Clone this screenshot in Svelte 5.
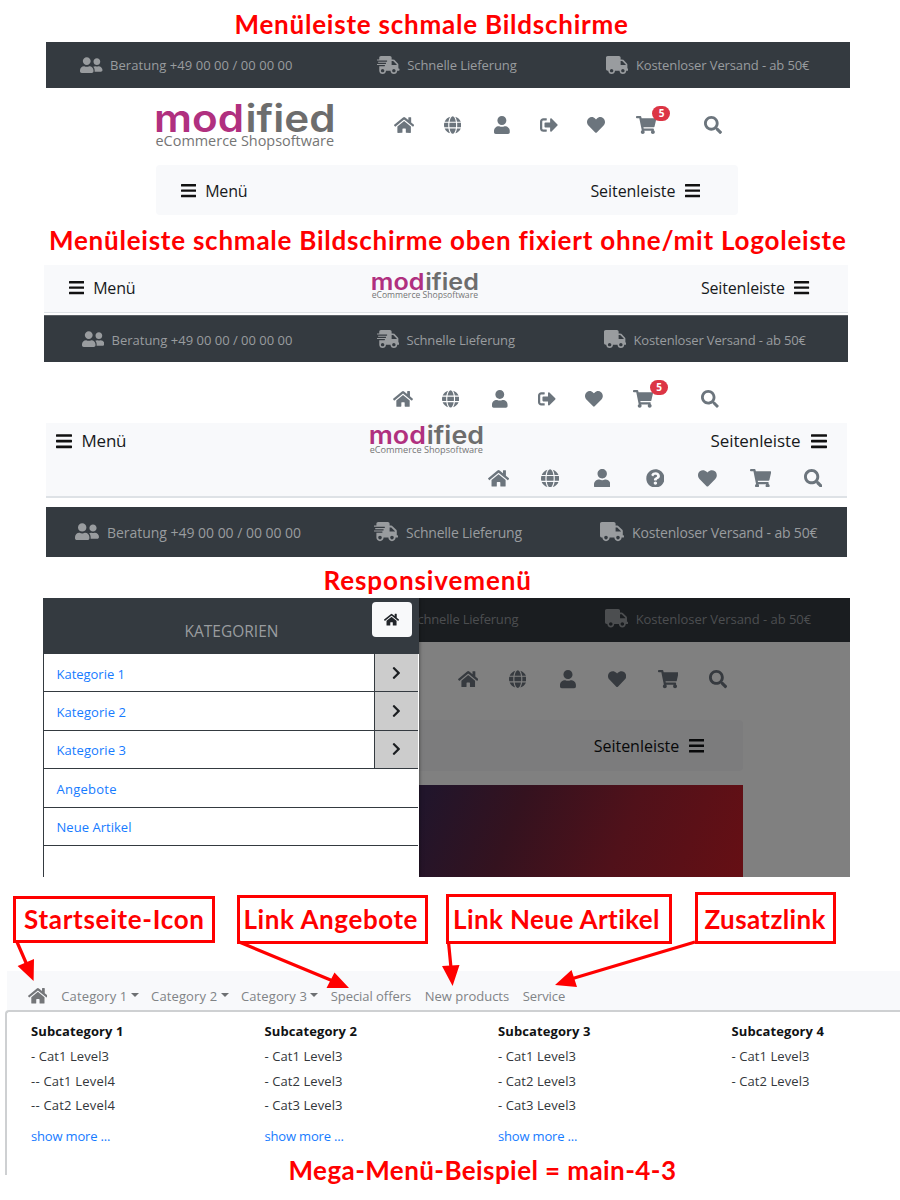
<script>
  const wheels =
    'M160 464c-26.5 0-48-21.5-48-48s21.5-48 48-48 48 21.5 48 48-21.5 48-48 48zm320 0c-26.5 0-48-21.5-48-48s21.5-48 48-48 48 21.5 48 48-21.5 48-48 48zm80-208H416V144h44.1l99.9 99.9V256z';

  const icons = {
    home: [576, 'M280.37 148.26L96 300.11V464a16 16 0 0 0 16 16l112.06-.29a16 16 0 0 0 15.92-16V368a16 16 0 0 1 16-16h64a16 16 0 0 1 16 16v95.64a16 16 0 0 0 16 16.05L464 480a16 16 0 0 0 16-16V300L295.67 148.26a12.19 12.19 0 0 0-15.3 0zM571.6 251.47L488 182.56V44.05a12 12 0 0 0-12-12h-56a12 12 0 0 0-12 12v72.61L318.47 43a48 48 0 0 0-61 0L4.34 251.47a12 12 0 0 0-1.6 16.9l25.5 31A12 12 0 0 0 45.15 301l235.22-193.74a12.19 12.19 0 0 1 15.3 0L530.9 301a12 12 0 0 0 16.9-1.6l25.5-31a12 12 0 0 0-1.7-16.93z'],
    globe: [496, 'M336.5 160C322 70.7 287.8 8 248 8s-74 62.7-88.5 152h177zM152 256c0 22.2 1.2 43.5 3.3 64h185.3c2.1-20.5 3.3-41.8 3.3-64s-1.2-43.5-3.3-64H155.3c-2.1 20.5-3.3 41.8-3.3 64zm324.7-96c-28.6-67.9-86.5-120.4-158-141.6 24.4 33.8 41.2 84.7 50 141.6h108zM177.2 18.4C105.8 39.6 47.8 92.1 19.3 160h108c8.7-56.9 25.5-107.8 49.9-141.6zM487.4 192H372.7c2.1 21 3.3 42.5 3.3 64s-1.2 43-3.3 64h114.6c5.5-20.5 8.6-41.8 8.6-64s-3.1-43.5-8.5-64zM120 256c0-21.5 1.2-43 3.3-64H8.6C3.2 212.5 0 233.8 0 256s3.2 43.5 8.6 64h114.6c-2-21-3.2-42.5-3.2-64zm39.5 96c14.5 89.3 48.7 152 88.5 152s74-62.7 88.5-152h-177zm159.3 141.6c71.4-21.2 129.4-73.7 158-141.6h-108c-8.8 56.9-25.6 107.8-50 141.6zM19.3 352c28.6 67.9 86.5 120.4 158 141.6-24.4-33.8-41.2-84.7-50-141.6h-108z'],
    user: [448, 'M224 256c70.7 0 128-57.3 128-128S294.7 0 224 0 96 57.3 96 128s57.3 128 128 128zm89.6 32h-16.7c-22.2 10.2-46.9 16-72.9 16s-50.6-5.8-72.9-16h-16.7C60.2 288 0 348.2 0 422.4V464c0 26.5 21.5 48 48 48h352c26.5 0 48-21.5 48-48v-41.6c0-74.2-60.2-134.4-134.4-134.4z'],
    logout: [512, 'M497 273L329 441c-15 15-41 4.5-41-17v-96H152c-13.3 0-24-10.7-24-24v-96c0-13.3 10.7-24 24-24h136V88c0-21.4 25.9-32 41-17l168 168c9.3 9.4 9.3 24.6 0 34zM192 436v-40c0-6.6-5.4-12-12-12H96c-17.7 0-32-14.3-32-32V160c0-17.7 14.3-32 32-32h84c6.6 0 12-5.4 12-12V76c0-6.6-5.4-12-12-12H96c-53 0-96 43-96 96v192c0 53 43 96 96 96h84c6.6 0 12-5.4 12-12z'],
    heart: [512, 'M462.3 62.6C407.5 15.9 326 24.3 275.7 76.2L256 96.5l-19.7-20.3C186.1 24.3 104.5 15.9 49.7 62.6c-62.8 53.6-66.1 149.8-9.9 207.9l193.5 199.8c12.5 12.9 32.8 12.9 45.3 0l193.5-199.8c56.3-58.1 53-154.3-9.8-207.9z'],
    cart: [576, 'M528.12 301.319l47.273-208C578.806 78.301 567.391 64 551.99 64H159.208l-9.166-44.81C147.758 8.021 137.93 0 126.529 0H24C10.745 0 0 10.745 0 24v16c0 13.255 10.745 24 24 24h69.883l70.248 343.435C147.325 417.1 136 435.222 136 456c0 30.928 25.072 56 56 56s56-25.072 56-56c0-15.674-6.447-29.835-16.824-40h209.647C430.447 426.165 424 440.326 424 456c0 30.928 25.072 56 56 56s56-25.072 56-56c0-22.172-12.888-41.332-31.579-50.405l5.517-24.276c3.413-15.018-8.002-29.319-23.403-29.319H218.117l-6.545-32h293.145c11.206 0 20.92-7.754 23.403-18.681z'],
    search: [512, 'M505 442.7L405.3 343c-4.5-4.5-10.6-7-17-7H372c27.6-35.3 44-79.7 44-128C416 93.1 322.9 0 208 0S0 93.1 0 208s93.1 208 208 208c48.3 0 92.7-16.4 128-44v16.3c0 6.4 2.5 12.5 7 17l99.7 99.7c9.4 9.4 24.6 9.4 33.9 0l28.3-28.3c9.4-9.4 9.4-24.6.1-34zM208 336c-70.7 0-128-57.2-128-128 0-70.7 57.2-128 128-128 70.7 0 128 57.2 128 128 0 70.7-57.2 128-128 128z'],
    help: [512, 'M504 256c0 136.997-111.043 248-248 248S8 392.997 8 256C8 119.083 119.043 8 256 8s248 111.083 248 248zM262.655 90c-54.497 0-89.255 22.957-116.549 63.758-3.536 5.286-2.353 12.415 2.715 16.258l34.699 26.31c5.205 3.947 12.621 3.008 16.665-2.122 17.864-22.658 30.113-35.797 57.303-35.797 20.429 0 45.698 13.148 45.698 32.958 0 14.976-12.363 22.667-32.534 33.976C247.128 238.528 216 254.941 216 296v4c0 6.627 5.373 12 12 12h56c6.627 0 12-5.373 12-12v-1.333c0-28.462 83.186-29.647 83.186-106.667 0-58.002-60.165-102-116.531-102zM256 338c-25.365 0-46 20.635-46 46 0 25.364 20.635 46 46 46s46-20.636 46-46c0-25.365-20.635-46-46-46z'],
    bars: [448, 'M16 132h416c8.8 0 16-7.2 16-16V76c0-8.8-7.2-16-16-16H16C7.2 60 0 67.2 0 76v40c0 8.8 7.2 16 16 16zm0 160h416c8.8 0 16-7.2 16-16v-40c0-8.8-7.2-16-16-16H16c-8.8 0-16 7.2-16 16v40c0 8.8 7.2 16 16 16zm0 160h416c8.8 0 16-7.2 16-16v-40c0-8.8-7.2-16-16-16H16c-8.8 0-16 7.2-16 16v40c0 8.8 7.2 16 16 16z'],
    truck: [640, 'M624 352h-16V243.9c0-12.7-5.1-24.9-14.1-33.9L494 110.1c-9-9-21.2-14.1-33.9-14.1H416V48c0-26.5-21.5-48-48-48H48C21.5 0 0 21.5 0 48v320c0 26.5 21.5 48 48 48h16c0 53 43 96 96 96s96-43 96-96h128c0 53 43 96 96 96s96-43 96-96h48c8.8 0 16-7.2 16-16v-32c0-8.8-7.2-16-16-16z' + wheels],
    express: [640, 'M624 352h-16V243.9c0-12.7-5.1-24.9-14.1-33.9L494 110.1c-9-9-21.2-14.1-33.9-14.1H416V48c0-26.5-21.5-48-48-48H112C85.5 0 64 21.5 64 48v48H8c-4.4 0-8 3.6-8 8v16c0 4.4 3.6 8 8 8h272c4.4 0 8 3.6 8 8v16c0 4.4-3.6 8-8 8H40c-4.4 0-8 3.6-8 8v16c0 4.4 3.6 8 8 8h208c4.4 0 8 3.6 8 8v16c0 4.4-3.6 8-8 8H8c-4.4 0-8 3.6-8 8v16c0 4.4 3.6 8 8 8h208c4.4 0 8 3.6 8 8v16c0 4.4-3.6 8-8 8H64v128c0 53 43 96 96 96s96-43 96-96h128c0 53 43 96 96 96s96-43 96-96h48c8.8 0 16-7.2 16-16v-32c0-8.8-7.2-16-16-16z' + wheels],
    friends: [640, 'M192 256c61.9 0 112-50.1 112-112S253.9 32 192 32 80 82.1 80 144s50.1 112 112 112zm76.8 32h-8.3c-20.8 10-43.9 16-68.5 16s-47.6-6-68.5-16h-8.3C51.6 288 0 339.6 0 403.2V432c0 26.5 21.5 48 48 48h288c26.5 0 48-21.5 48-48v-28.8c0-63.6-51.6-115.2-115.2-115.2zM480 256c53 0 96-43 96-96s-43-96-96-96-96 43-96 96 43 96 96 96zm48 32h-3.8c-13.9 4.8-28.6 8-44.2 8s-30.3-3.2-44.2-8H432c-20.4 0-39.2 5.9-55.7 15.4 24.4 26.3 39.7 61.2 39.7 99.8v38.4c0 2.2-.5 4.3-.6 6.4H592c26.5 0 48-21.5 48-48 0-61.9-50.1-112-112-112z'],
    chevron: [320, 'M285.476 272.971L91.132 467.314c-9.373 9.373-24.569 9.373-33.941 0l-22.667-22.667c-9.357-9.357-9.375-24.522-.04-33.901L188.505 256 34.484 101.255c-9.335-9.379-9.317-24.544.04-33.901l22.667-22.667c9.373-9.373 24.569-9.373 33.941 0L285.475 239.03c9.373 9.372 9.373 24.568.001 33.941z']
  };

  // Tracks the text so that it fills the given width.
  function fit(node, width) {
    const n = node.textContent.length;
    const spacing = (width - node.getBoundingClientRect().width) / (n - 1);
    node.style.letterSpacing = `${spacing}px`;
    node.style.marginRight = `${-spacing}px`;
  }

  // Turns left edges into grid tracks, the last one open.
  const tracks = (lefts) =>
    lefts.slice(1).map((x, i) => `${x - lefts[i]}px`).join(' ') + ' auto';

  const shopIcons = ['home', 'globe', 'user', 'logout', 'heart', 'cart', 'search'];

  const categories = [
    ['Kategorie 1', 68.5, true],
    ['Kategorie 2', 69.5, true],
    ['Kategorie 3', 69.5, true],
    ['Angebote', 60, false],
    ['Neue Artikel', 75, false]
  ];

  const mega = [
    { title: 'Subcategory 1', items: [['- Cat1 Level3', 78], ['-- Cat1 Level4', 84], ['-- Cat2 Level4', 84]], more: true },
    { title: 'Subcategory 2', items: [['- Cat1 Level3', 78], ['- Cat2 Level3', 78], ['- Cat3 Level3', 78]], more: true },
    { title: 'Subcategory 3', items: [['- Cat1 Level3', 78], ['- Cat2 Level3', 78], ['- Cat3 Level3', 78]], more: true },
    { title: 'Subcategory 4', items: [['- Cat1 Level3', 78], ['- Cat2 Level3', 78]], more: false }
  ];

  const links = [
    ['Category 1', 66, true],
    ['Category 2', 66, true],
    ['Category 3', 66, true],
    ['Special offers', 80.5, false],
    ['New products', 84.5, false],
    ['Service', 42.5, false]
  ];
</script>

{#snippet icon(name, size)}
  <svg class="icon" viewBox="0 0 {icons[name][0]} 512" width={(icons[name][0] / 512) * size} height={size} aria-hidden="true">
    <path fill="currentColor" d={icons[name][1]} />
  </svg>
{/snippet}

{#snippet label(text, width)}
  <span class="label" use:fit={width}>{text}</span>
{/snippet}

{#snippet logo(width, height)}
  <svg class="logo" viewBox="0 0 178 48" {width} {height} preserveAspectRatio="none">
    <text class="word" x="-2" y="30.5" textLength="90" lengthAdjust="spacingAndGlyphs" fill="#b0307f">mod</text>
    <text class="word" x="89.5" y="30.5" textLength="90" lengthAdjust="spacingAndGlyphs" fill="#6d6d6d">ified</text>
    <text class="claim" x="-.5" y="44.5" textLength="178.5" lengthAdjust="spacingAndGlyphs" fill="#757575">eCommerce Shopsoftware</text>
  </svg>
{/snippet}

{#snippet infobar(cls, lefts, size, widths)}
  <div class="infobar {cls}" style:grid-template-columns={tracks(lefts)}>
    <div class="info">{@render icon('friends', size)}{@render label('Beratung +49 00 00 / 00 00 00', widths[0])}</div>
    <div class="info">{@render icon('express', size)}{@render label('Schnelle Lieferung', widths[1])}</div>
    <div class="info">{@render icon('truck', size)}{@render label('Kostenloser Versand - ab 50€', widths[2])}</div>
  </div>
{/snippet}

{#snippet toolbar(cls, names, lefts, size, badge)}
  <div class="toolbar {cls}" style:grid-template-columns={tracks(lefts)}>
    {#each names as name}
      <span class="tool">
        {@render icon(name, size)}
        {#if badge && name === 'cart'}<b class="badge">5</b>{/if}
      </span>
    {/each}
  </div>
{/snippet}

{#snippet menu(size, width)}
  <div class="toggle">{@render icon('bars', size)}{@render label('Menü', width)}</div>
{/snippet}

{#snippet sidebar(size, width)}
  <div class="toggle">{@render label('Seitenleiste', width)}{@render icon('bars', size)}</div>
{/snippet}

<main>
  <h2 class="caption c1">{@render label('Menüleiste schmale Bildschirme', 393.5)}</h2>

  {@render infobar('b1', [80, 377.3, 606], 18, [182.5, 109.5, 173.5])}
  <div class="head">
    {@render logo(178, 48)}
    {@render toolbar('t1', shopIcons, [393.7, 443.7, 494, 540, 587.5, 636, 704], 18, true)}
  </div>
  <nav class="menubar">{@render menu(17.3, 42.5)}{@render sidebar(17.3, 85)}</nav>

  <h2 class="caption c2">{@render label('Menüleiste schmale Bildschirme oben fixiert ohne/mit Logoleiste', 796.5)}</h2>

  <nav class="sticky s1">{@render menu(17.3, 42.5)}{@render logo(106, 28.5)}{@render sidebar(17.3, 84)}</nav>
  {@render infobar('b2', [81.5, 376.5, 603.5], 18, [181, 108.5, 172.5])}
  {@render toolbar('t2', shopIcons, [393.2, 442, 492, 538, 585, 633.5, 701], 17.8, true)}

  <nav class="sticky s2">
    <div class="line">{@render menu(18.3, 45)}{@render logo(113, 30.5)}{@render sidebar(18.3, 90)}</div>
    {@render toolbar('t3', ['home', 'globe', 'user', 'help', 'heart', 'cart', 'search'], [488, 540.7, 594, 645.7, 698, 750, 803.7], 18.8, false)}
  </nav>
  {@render infobar('b3', [75, 374, 600], 19.2, [194, 116, 185.5])}

  <h2 class="caption c3">{@render label('Responsivemenü', 207.5)}</h2>

  <section class="canvas">
    <aside>
      <header>
        <span class="title">{@render label('KATEGORIEN', 94)}</span>
        <span class="homebtn">{@render icon('home', 13.4)}</span>
      </header>
      <ul>
        {#each categories as [name, width, sub]}
          <li>
            {@render label(name, width)}
            {#if sub}<span class="arrow">{@render icon('chevron', 14)}</span>{/if}
          </li>
        {/each}
      </ul>
    </aside>
    <div class="dimmed">
      <div class="dimbar">
        <div class="info cut">{@render label('chnelle Lieferung', 101)}</div>
        <div class="info">{@render icon('truck', 18.5)}{@render label('Kostenloser Versand - ab 50€', 175.5)}</div>
      </div>
      {@render toolbar('t4', ['home', 'globe', 'user', 'heart', 'cart', 'search'], [458, 508.5, 559.7, 608.3, 658, 709], 18.2, false)}
      <div class="dimmenu">{@render sidebar(17.5, 85.5)}</div>
      <div class="banner"></div>
    </div>
  </section>

  <section class="notes">
    <div class="note n1">{@render label('Startseite-Icon', 180)}</div>
    <div class="note n2">{@render label('Link Angebote', 174)}</div>
    <div class="note n3">{@render label('Link Neue Artikel', 207)}</div>
    <div class="note n4">{@render label('Zusatzlink', 121)}</div>
    <svg class="arrows" viewBox="0 877 900 120" width="900" height="120" aria-hidden="true">
      <g stroke="#f00" stroke-width="3.2" fill="none">
        <path d="M17 942L27 965M238 941.500L333 981M448.500 942L451 968M695 942L571 979" />
      </g>
      <path fill="#f00" d="M33.600 981L17.600 966L34 959zM349 988L326.500 988L334.500 972.500zM452.600 986L442 966L459.500 965zM555 985L577 987L571.500 970z" />
    </svg>
  </section>

  <nav class="meganav">
    {@render icon('home', 17.6)}
    {#each links as [name, width, drop]}
      <span class="link" class:drop>{@render label(name, width)}</span>
    {/each}
  </nav>
  <section class="mega">
    {#each mega as col}
      <div class="col">
        <h3>{@render label(col.title, 92.5)}</h3>
        {#each col.items as [text, width]}<p>{@render label(text, width)}</p>{/each}
        {#if col.more}<p class="more">{@render label('show more ...', 79.5)}</p>{/if}
      </div>
    {/each}
  </section>
  <h2 class="caption c4">{@render label('Mega-Menü-Beispiel = main-4-3', 387.5)}</h2>
</main>

<style>
  :global(body) { margin: 0; background: #fff; }
  main {
    width: 900px; height: 1200px; overflow: hidden; position: relative;
    display: flex; flex-direction: column;
    font: 13px/20px "Open Sans", "Noto Sans", sans-serif; color: #212529;
  }
  .icon { display: block; flex: none; }
  .label { display: inline-block; white-space: nowrap; flex: none; }
  h2, h3, p, ul { margin: 0; padding: 0; font-weight: inherit; font-size: inherit; }

  .caption {
    box-sizing: border-box; flex: none; color: #f00;
    font: 700 26px/30px Lato, sans-serif;
  }
  .c1 { height: 42px; padding: 9px 0 0 234.5px; }
  .c2 { height: 50px; padding: 10px 0 0 49px; }
  .c3 { height: 41px; padding: 8px 0 0 323.5px; }
  .c4 { height: 46px; padding: 0 0 0 288.5px; margin-top: -20px; }

  .infobar {
    box-sizing: border-box; flex: none; display: grid; align-items: center;
    background: #343a40; color: #999c9f;
  }
  .info { display: flex; align-items: center; gap: 7.5px; }
  .info .label { padding-top: 1px; }
  .b1 { margin: 0 50px 0 46px; height: 46px; padding-left: 34px; }
  .b1 .label { padding-top: 0; }
  .b2 { margin: 2px 52px 0 44px; height: 47px; padding-left: 37.5px; border-top: 1px solid #5b6065; }
  .b3 { margin: 9px 53px 0 46px; height: 50px; padding-left: 29px; font-size: 14px; }
  .b3 .info { gap: 8px; }

  .head { flex: none; height: 77px; display: flex; padding-left: 156px; }
  .logo { display: block; flex: none; overflow: visible; }
  .head .logo { margin-top: 13px; }
  .word { font: 600 38.5px Inter, sans-serif; }
  .claim { font: 400 15px "Open Sans", sans-serif; }

  .toolbar { flex: none; display: grid; align-items: center; color: #6c757d; }
  .tool { position: relative; display: block; }
  .badge {
    position: absolute; left: 16.5px; top: -10px; width: 18px; height: 15px;
    border-radius: 8px; background: #dc3545; color: #fff;
    font: 700 10px/15px "Open Sans", sans-serif; text-align: center;
  }
  .t1 { margin-left: 59.7px; height: 74px; }
  .t2 { height: 61px; padding: 13px 0 0 393.2px; box-sizing: border-box; }

  .toggle { display: flex; align-items: center; gap: 9.5px; font-size: 16px; color: #17191c; }
  .toggle .icon { color: #111; }
  .toggle .label { padding-top: 1px; }
  .menubar {
    flex: none; height: 50px; margin: 0 162px 0 156px; padding: 1px 38px 0 24.5px; box-sizing: border-box;
    display: flex; align-items: center; justify-content: space-between;
    background: #f8f9fb; border-radius: 4px;
  }
  .sticky { flex: none; box-sizing: border-box; background: #f8f9fb; }
  .s1 {
    height: 48px; margin: 0 52px 0 44px; padding: 0 38.5px 2px 24.5px; border-bottom: 1px solid #dee2e6;
    display: flex; align-items: center;
  }
  .s1 .logo { margin: -2px auto 0 236px; }
  .s2 { height: 75px; margin: 0 53px 0 46px; border-bottom: 2px solid #dee2e6; }
  .s2 .toggle { font-size: 17px; gap: 10px; }
  .s2 .toggle .label { padding-top: 0; }
  .line { height: 36px; display: flex; align-items: center; padding: 0 20.5px 0 9.5px; }
  .line .logo { margin: -1px auto 0 243.5px; }
  .t3 { height: 38px; padding-left: 442px; }

  .canvas { flex: none; height: 279px; margin: 0 50px 0 43px; display: flex; overflow: hidden; }
  aside {
    width: 376px; box-sizing: border-box; position: relative; z-index: 1;
    border-left: 1px solid #343a40; background: #fff; box-shadow: 0 0 4px rgba(0, 0, 0, .55);
  }
  header {
    height: 56px; background: #343a40; color: #999c9f; font-size: 15.5px;
    display: flex; align-items: flex-start; justify-content: space-between;
  }
  .title { padding: 23px 0 0 140.5px; }
  .homebtn {
    width: 39.5px; height: 35px; margin: 4px 7.5px 0 0; border-radius: 4px;
    background: #f8f9fa; color: #212529; display: flex; align-items: center; justify-content: center;
  }
  ul { list-style: none; color: #167bff; margin-right: 1.5px; }
  li {
    height: 38.4px; box-sizing: border-box; border-bottom: 1px solid #343a40;
    padding: 2px 0 0 12.5px; display: flex; align-items: center; justify-content: space-between;
  }
  .arrow {
    align-self: stretch; margin-top: -2px; width: 42.5px; background: #ccc; color: #1b1e21;
    border-left: 1px solid #343a40; display: flex; align-items: center; justify-content: center;
  }
  .dimmed { flex: 1; background: #808080; overflow: hidden; }
  .dimbar {
    height: 44px; padding-bottom: 3px; box-sizing: border-box; background: #1a1d20; color: #4c4e50;
    display: flex; align-items: center;
  }
  .cut { width: 187.5px; margin-left: -1.5px; }
  .t4 { height: 75px; padding-left: 39px; color: #363a3f; }
  .dimmenu {
    height: 51px; width: 324px; box-sizing: border-box; margin-top: 3px; padding-right: 39px;
    background: #7c7c7d; border-radius: 0 4px 4px 0;
    display: flex; align-items: center; justify-content: flex-end;
  }
  .dimmenu .toggle, .dimmenu :global(.icon) { color: #08090a; }
  .banner {
    width: 324px; height: 93px; margin-top: 14px;
    background: linear-gradient(112deg, #21152b 3%, #34121f 30%, #50111a 62%, #660f14 100%);
  }

  .notes { flex: none; height: 94px; display: flex; align-items: flex-start; position: relative; }
  .note {
    box-sizing: border-box; flex: none; border: 3px solid #f00; background: #fff; color: #f00;
    font: 700 26px/30px Lato, sans-serif;
  }
  .n1 { margin: 18.5px 0 0 13px; width: 202px; height: 47px; padding: 5px 0 0 8px; }
  .n2 { margin: 17.5px 0 0 21.5px; width: 191.5px; height: 49px; padding: 6px 0 0 4px; }
  .n3 { margin: 16.5px 0 0 17.5px; width: 226.5px; height: 50px; padding: 7.5px 0 0 4.5px; }
  .n4 { margin: 15px 0 0 22.5px; width: 141px; height: 52px; padding: 9px 0 0 7px; }
  .arrows { position: absolute; left: 0; top: 0; z-index: 2; }

  .meganav {
    flex: none; height: 39px; margin-left: 7px; padding: 10px 0 0 20.5px; box-sizing: border-box;
    background: #f8f9fb; color: #808386; display: flex; align-items: flex-start;
  }
  .meganav .icon { color: #747679; margin: 5.5px 14px 0 0; }
  .link { display: flex; margin: 5px 13.5px 0 0; }
  .link.drop { margin-right: 12.3px; }
  .drop::after {
    content: ""; align-self: flex-start; margin: 7px 0 0 3.5px;
    border: 4px solid transparent; border-top-color: #6d7073; border-bottom: 0;
  }
  .mega {
    flex: none; height: 164.5px; box-sizing: border-box; margin-left: 5px; padding: 9px 0 0 24px;
    border: 2px solid #ced0d2; border-width: 2px 0 0 2px; border-top-left-radius: 4px;
    display: grid; grid-template-columns: repeat(4, 233.5px);
  }
  h3 { font-weight: 700; color: #101214; line-height: 20px; margin-bottom: 3px; }
  p { line-height: 24.5px; color: #33373b; }
  p.more { color: #167bff; margin-top: 6px; }
</style>
